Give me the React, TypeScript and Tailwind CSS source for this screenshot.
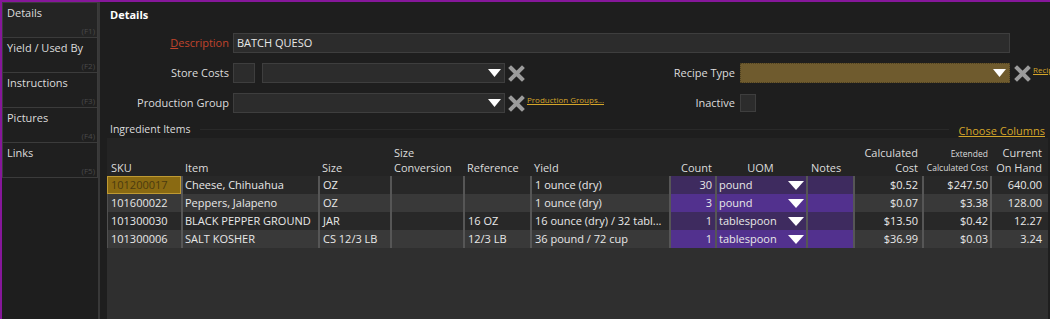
import React from "react";

const font = { fontFamily: '"Open Sans", "Noto Sans", sans-serif' };

const tabs = [
  { label: "Details", key: "(F1)" },
  { label: "Yield / Used By", key: "(F2)" },
  { label: "Instructions", key: "(F3)" },
  { label: "Pictures", key: "(F4)" },
  { label: "Links", key: "(F5)" },
];

type Row = {
  sku: string;
  item: string;
  size: string;
  conv: string;
  ref: string;
  yld: string;
  count: string;
  uom: string;
  calc: string;
  ext: string;
  onHand: string;
};

const rows: Row[] = [
  { sku: "101200017", item: "Cheese, Chihuahua", size: "OZ", conv: "", ref: "", yld: "1 ounce (dry)", count: "30", uom: "pound", calc: "$0.52", ext: "$247.50", onHand: "640.00" },
  { sku: "101600022", item: "Peppers, Jalapeno", size: "OZ", conv: "", ref: "", yld: "1 ounce (dry)", count: "3", uom: "pound", calc: "$0.07", ext: "$3.38", onHand: "128.00" },
  { sku: "101300030", item: "BLACK PEPPER GROUND", size: "JAR", conv: "", ref: "16 OZ", yld: "16 ounce (dry) / 32 tabl...", count: "1", uom: "tablespoon", calc: "$13.50", ext: "$0.42", onHand: "12.27" },
  { sku: "101300006", item: "SALT KOSHER", size: "CS 12/3 LB", conv: "", ref: "12/3 LB", yld: "36 pound / 72 cup", count: "1", uom: "tablespoon", calc: "$36.99", ext: "$0.03", onHand: "3.24" },
];

const gridCols =
  "grid grid-cols-[74px_137px_72px_73px_67px_139px_46px_91px_47px_69px_68px_56px]";

function ClearIcon() {
  return (
    <svg width="17" height="17" viewBox="0 0 17 17" className="shrink-0">
      <path d="M3 3 L14 14 M14 3 L3 14" stroke="#9c9c9c" strokeWidth="4" strokeLinecap="square" />
    </svg>
  );
}

function Arrow({ w = 13, h = 8 }: { w?: number; h?: number }) {
  return (
    <svg width={w} height={h} viewBox={`0 0 ${w} ${h}`} className="shrink-0">
      <polygon points={`0,0 ${w},0 ${w / 2},${h}`} fill="#ffffff" />
    </svg>
  );
}

function Dropdown({ className }: { className: string }) {
  return (
    <div className={`flex h-[20px] shrink-0 items-center justify-end pr-[3px] ${className}`}>
      <Arrow />
    </div>
  );
}

function Link({ children, className = "" }: { children: React.ReactNode; className?: string }) {
  return (
    <span className={`shrink-0 whitespace-nowrap text-[#d4a52a] underline ${className}`}>{children}</span>
  );
}

function Cell({
  children,
  className = "",
  sep = true,
}: {
  children?: React.ReactNode;
  className?: string;
  sep?: boolean;
}) {
  return (
    <div
      className={`flex h-[18px] items-center overflow-hidden whitespace-nowrap ${sep ? "border-l-2 border-[#565656]" : ""} ${className}`}
    >
      {children}
    </div>
  );
}

export default function App() {
  return (
    <div
      style={font}
      className="flex h-[319px] w-[1050px] overflow-hidden border-l-2 border-t-2 border-[#86179a] bg-[#1e1e1e] text-[11px] text-[#dcdcdc]"
    >
      {/* side tabs */}
      <div className="w-[98px] shrink-0 border-r-2 border-[#383838] pt-[1px]">
        {tabs.map((t, i) => (
          <div
            key={t.label}
            className={`relative -mt-px h-[36px] border border-[#3b3b3b] px-[4px] pt-[2px] leading-[16px] ${i === 0 ? "bg-[#242424]" : "bg-[#1f1f1f]"}`}
          >
            {t.label}
            <span className="absolute bottom-[1px] right-[2px] text-[8px] leading-[10px] text-[#4a4a4a]">
              {t.key}
            </span>
          </div>
        ))}
      </div>

      {/* main */}
      <div className="flex min-w-0 flex-1 flex-col pl-[7px]">
        <div className="mt-[5px] h-[16px] pl-[3px] font-bold leading-[16px] text-white">Details</div>

        {/* description */}
        <div className="mt-[10px] flex h-[20px] items-center">
          <div className="w-[122px] shrink-0 text-right text-[#c0442c]">
            <span className="underline">D</span>escription
          </div>
          <div className="ml-[4px] flex h-[20px] w-[777px] shrink-0 items-center border border-[#3e3e3e] bg-[#2c2c2c] pl-[3px] text-[#e8e8e8]">
            BATCH QUESO
          </div>
        </div>

        {/* store costs / recipe type */}
        <div className="mt-[10px] flex h-[20px] items-center">
          <div className="w-[122px] shrink-0 text-right">Store Costs</div>
          <div className="ml-[4px] h-[20px] w-[22px] shrink-0 border border-[#3e3e3e] bg-[#2c2c2c]" />
          <Dropdown className="ml-[7px] w-[243px] border border-[#3e3e3e] bg-[#2c2c2c]" />
          <div className="ml-[3px] shrink-0">
            <ClearIcon />
          </div>
          <div className="w-[210px] shrink-0 text-right">Recipe Type</div>
          <Dropdown className="ml-[5px] w-[270px] border border-dotted border-[#4f4120] bg-[#6f5b2e]" />
          <div className="ml-[4px] shrink-0">
            <ClearIcon />
          </div>
          <Link className="ml-[2px] -mt-[6px] text-[8px]">Recipe Types...</Link>
        </div>

        {/* production group / inactive */}
        <div className="mt-[10px] flex h-[20px] items-center">
          <div className="w-[122px] shrink-0 text-right">Production Group</div>
          <Dropdown className="ml-[4px] w-[272px] border border-[#3e3e3e] bg-[#2c2c2c]" />
          <div className="ml-[3px] shrink-0">
            <ClearIcon />
          </div>
          <div className="flex w-[210px] shrink-0 items-center">
            <Link className="ml-[2px] -mt-[6px] text-[8px]">Production Groups...</Link>
            <div className="flex-1 text-right">Inactive</div>
          </div>
          <div className="ml-[5px] h-[18px] w-[16px] shrink-0 border border-[#3e3e3e] bg-[#2c2c2c]" />
        </div>

        {/* ingredient items header */}
        <div className="mt-[8px] flex h-[17px] items-center pr-[5px]">
          <span className="pl-[3px] text-[10.5px]">Ingredient Items</span>
          <div className="mx-[10px] h-px flex-1 bg-[#292929]" />
          <Link className="mt-[4px] text-[11px]">Choose Columns</Link>
        </div>

        {/* grid */}
        <div className="mr-[2px] flex-1 bg-[#2f2f2f]">
          <div className={`${gridCols} h-[38px] items-end bg-[#242424] pb-[1px] leading-[15px]`}>
            <div className="pl-[4px]">SKU</div>
            <div className="pl-[4px]">Item</div>
            <div className="pl-[4px]">Size</div>
            <div className="pl-[4px]">
              Size
              <br />
              Conversion
            </div>
            <div className="pl-[4px]">Reference</div>
            <div className="pl-[4px]">Yield</div>
            <div className="pr-[3px] text-right">Count</div>
            <div className="text-center">UOM</div>
            <div className="pl-[5px]">Notes</div>
            <div className="pr-[4px] text-right">
              Calculated
              <br />
              Cost
            </div>
            <div className="pr-[2px] text-right text-[8.5px] leading-[14px]">
              Extended
              <br />
              Calculated Cost
            </div>
            <div className="pr-[4px] text-right">
              Current
              <br />
              On Hand
            </div>
          </div>

          {rows.map((r, i) => {
            const odd = i % 2 === 0;
            const bg = odd ? "bg-[#282828]" : "bg-[#393939]";
            const purple = odd ? "bg-[#3e2b5f]" : "bg-[#52318e]";
            return (
              <div key={r.sku} className={`${gridCols} ${bg} text-[#e8e8e8]`}>
                {i === 0 ? (
                  <Cell sep={false} className="border border-[#bf9a33] bg-[#8a6a12] pl-[3px] text-[#4a3b10]">
                    {r.sku}
                  </Cell>
                ) : (
                  <Cell sep={false} className="border-l border-[#505050] pl-[3px]">
                    {r.sku}
                  </Cell>
                )}
                <Cell className="pl-[2px]">{r.item}</Cell>
                <Cell className="pl-[3px]">{r.size}</Cell>
                <Cell>{r.conv}</Cell>
                <Cell className="pl-[3px]">{r.ref}</Cell>
                <Cell className="pl-[3px]">{r.yld}</Cell>
                <Cell className={`${purple} justify-end pr-[3px]`}>{r.count}</Cell>
                <Cell className={`${purple} justify-between pl-[2px] pr-[2px]`}>
                  <span>{r.uom}</span>
                  <Arrow w={16} h={9} />
                </Cell>
                <Cell className={purple} />
                <Cell className="justify-end pr-[4px]">{r.calc}</Cell>
                <Cell className="justify-end pr-[2px]">{r.ext}</Cell>
                <Cell className="justify-end pr-[4px]">{r.onHand}</Cell>
              </div>
            );
          })}
        </div>
      </div>
    </div>
  );
}
